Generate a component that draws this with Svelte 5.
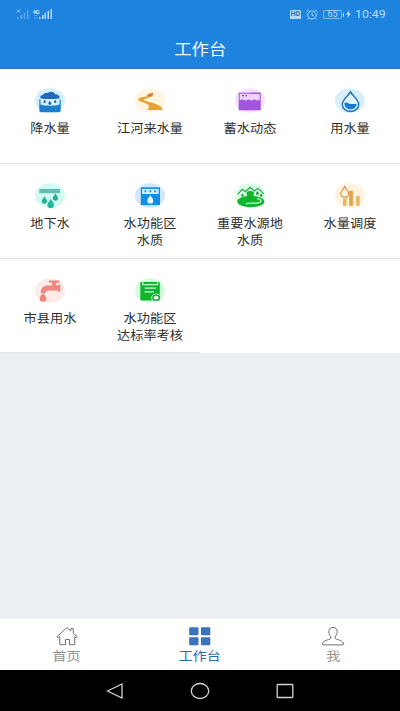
<script lang="ts">
  const items = [
    { icon: 'rain', lines: ['降水量'], halo: '#d3effc' },
    { icon: 'river', lines: ['江河来水量'], halo: '#fff6e2' },
    { icon: 'storage', lines: ['蓄水动态'], halo: '#f3e2fc' },
    { icon: 'usage', lines: ['用水量'], halo: '#d7effc' },
    { icon: 'ground', lines: ['地下水'], halo: '#d0fbf3' },
    { icon: 'zone', lines: ['水功能区', '水质'], halo: '#d3e7fa' },
    { icon: 'source', lines: ['重要水源地', '水质'], halo: '#d9fce6' },
    { icon: 'dispatch', lines: ['水量调度'], halo: '#fff3df' },
    { icon: 'tap', lines: ['市县用水'], halo: '#fdebe9' },
    { icon: 'check', lines: ['水功能区', '达标率考核'], halo: '#d6fce0' }
  ];

  const tabs = [
    { icon: 'home', label: '首页' },
    { icon: 'work', label: '工作台' },
    { icon: 'me', label: '我' }
  ];

  let active = $state('work');
</script>

{#snippet drop(x: number, y: number, s: number, fill: string)}
  <path
    transform="translate({x} {y}) scale({s})"
    d="M0 -1.4C.4 -.7 1 -.2 1 .4A1 .95 0 0 1 -1 .4C-1 -.2 -.4 -.7 0 -1.4Z"
    {fill}
  />
{/snippet}

<div class="screen">
  <header>
    <div class="status">
      <svg class="signal" width="38" height="13" viewBox="0 0 38 13">
        <g fill="#5ba6ec">
          <rect x="2" y="9" width="1.5" height="2" />
          <rect x="5.5" y="7" width="1.5" height="4" />
          <rect x="8.7" y="4.5" width="1.5" height="6.500" />
          <rect x="12" y="2.500" width="1.500" height="8.500" />
        </g>
        <path d="M2 1.500l3 3M5 1.500l-3 3" stroke="#a9d4f8" stroke-width=".9" />
        <text x="17.500" y="5.500" font-size="6" font-weight="bold" fill="#d0e8fc" textLength="7">4G</text>
        <path d="M19 7.500h3.500M19 10h3.500" stroke="#5ba6ec" />
        <g fill="#b9dcfa">
          <rect x="24" y="9" width="1.500" height="2" />
          <rect x="27" y="7" width="1.500" height="4" />
          <rect x="29.500" y="4.800" width="1.500" height="6.200" />
          <rect x="32.500" y="3" width="1.500" height="8" />
          <rect x="35.500" y="1" width="1.500" height="10" />
        </g>
      </svg>
      <div class="right">
        <span class="hd">HD</span>
        <svg class="alarm" width="12" height="11" viewBox="0 0 12 11" fill="none" stroke="#b3daf9">
          <ellipse cx="6" cy="6" rx="4.300" ry="4" />
          <path d="M.7 2.800L3 .8M11.300 2.800L9 .8M6 3.800V6.200L7.800 7M2.800 9.200L2 10.400M9.200 9.200L10 10.400" />
        </svg>
        <span class="battery">65</span>
        <svg width="5" height="8" viewBox="0 0 5 8"><path d="M3.300 0L0 4.400h2L1.500 8 5 3.400H3z" fill="#b9dcfa" /></svg>
        <span class="time">10:49</span>
      </div>
    </div>
    <h1><span>工作台</span></h1>
  </header>

  <main>
    <div class="grid">
      {#each items as item}
        <div class="cell">
          <svg width="32" height="28" viewBox="0 0 32 28">
            <ellipse cx="16" cy="13.500" rx="15" ry="12.300" fill={item.halo} />
            {#if item.icon === 'rain'}
              <path d="M5.300 12.500h21.400v11.100a1.700 1.700 0 0 1-1.700 1.700H7a1.700 1.700 0 0 1-1.700-1.700z" fill="#1b7fd0" />
              <path d="M6.500 11.500h19v6c-4 1.600-15 1.600-19 0z" fill="#d5effd" />
              <path d="M7 11.500C5.500 10 6.600 8.200 8.800 8C10 5.600 13 6 14 5.700C16.500 4.200 20 4.700 21 7.200C24 7 27 9.500 25 11.500C19 12.300 13 12.300 7 11.500Z" fill="#1f68ba" />
              {@render drop(10.7, 14.4, 1.2, '#1268bd')}
              {@render drop(15.8, 15.8, 1.5, '#1268bd')}
              {@render drop(21.2, 14.4, 1.2, '#1268bd')}
            {:else if item.icon === 'river'}
              <path d="M19.500 6C18.500 8.400 15.500 9 12 9.500C7.500 10.100 3.800 11 4.300 12.800C5 15.200 12 15.400 14.300 18C15.600 19.600 14.600 21.400 13.500 23H28.700C29 20.600 25.500 18.300 20.500 16.500C15.500 14.800 9.400 14 10 12.600C10.700 11.200 17 10.700 18.800 8.700Z" fill="#e9a136" />
              <path d="M12.500 8.500l3.500-2.300 3.800-.3-2 2.600-2.300 1z" fill="#d97a3a" />
            {:else if item.icon === 'storage'}
              <rect x="4.700" y="5.700" width="22" height="17.600" fill="#ead2fa" />
              <path d="M4.700 5.700h11.600v1H5.700v6.600c1.600 0 1.600-.7 3-.7s1.500 1 3 1 1.600-1 3-1 1.500 1 3 1 1.500-1 3-1 1.500 1 3 1 1-.6 2-.6V7H16.300V5.500h10.400v17.800h-22z" fill="#a455de" />
              <path d="M8 8.700h2M11.500 8.700h1.500" stroke="#8c35cb" stroke-width="1.200" />
            {:else if item.icon === 'usage'}
              <path d="M16.500 5C18.500 8.600 24.700 12.400 24.700 17.400A8.200 7 0 0 1 8.300 17.400C8.300 12.400 14.500 8.600 16.500 5Z" fill="#e4f5fe" stroke="#2c79b5" stroke-width="1.600" />
              <path d="M10.400 16c2.300-1.500 4 .5 6.500 1 2 .4 3.800-.4 5.800-.3-.1 3.500-2.800 5.600-6.200 5.600-3.500 0-6.200-2.300-6.100-6.300z" fill="#1679d2" />
            {:else if item.icon === 'ground'}
              <rect x="5.300" y="7" width="20.700" height="4.200" fill="#58b9ab" />
              <path d="M6 8.400h20M6 10h20" stroke="#8fd5ca" stroke-width=".6" stroke-dasharray="1.200 .8" />
              {@render drop(10.4, 18.2, 2.6, '#25ad96')}
              {@render drop(16.7, 21.7, 3.3, '#25b79d')}
              {@render drop(21.4, 15.2, 2.6, '#25ad96')}
            {:else if item.icon === 'zone'}
              <rect x="6.800" y="5.300" width="19.200" height="17.800" fill="#158de2" />
              <rect x="8.200" y="7" width="16.400" height="5" fill="#d9effe" />
              <path d="M10.500 9.200h1.800M15.400 9.200h1.800M20.200 9.200H22" stroke="#168fe0" stroke-width="2" />
              {@render drop(16.3, 17.5, 3, '#e8f7ff')}
            {:else if item.icon === 'source'}
              <ellipse cx="16.800" cy="19.500" rx="13.600" ry="5.700" fill="#12b52c" />
              <path d="M12.500 10.500c1.200-2 6-2 7.500 0l-.8 6h-6z" fill="#12b52c" />
              <path d="M3.700 12.400L8.300 7.300l3 2.300L16 5.300l4.300 3.700 3.700-2.400 6 5.300" fill="none" stroke="#2aa34a" stroke-width="1.200" />
              <path d="M23 16.700c4.800.6 5.500 3.600 1 4.200-4 .6-9-.6-12 1" fill="none" stroke="#c8fad4" stroke-width="1.200" />
              {@render drop(8.5, 13, 1.3, '#17a236')}
              {@render drop(23.4, 11, 1.5, '#17a236')}
              {@render drop(27.2, 13, 1.3, '#17a236')}
            {:else if item.icon === 'dispatch'}
              <rect x="9" y="16.500" width="3.600" height="7.400" fill="#ecb463" />
              <rect x="15.200" y="8.800" width="3.700" height="15.100" fill="#e3a24c" />
              <rect x="22.200" y="14" width="3.400" height="9.900" fill="#ecb463" />
              <path d="M10.800 4.500C12 7.500 14.800 9 14.800 11.700A4 3.600 0 0 1 6.800 11.700C6.800 9 9.600 7.500 10.800 4.500Z" fill="#fff2dc" stroke="#d88b3d" stroke-width="1.100" />
            {:else if item.icon === 'tap'}
              <path d="M15 3.600h10.400v2.200h-3.200v2.600H24V7.800h2.300v7H24v-1.200h-9c-2.200 0-3 .7-3.200 2.400H6.700C6.700 11 9.500 8.400 14 8.400h4.200V5.800H15z" fill="#ee8780" />
              {@render drop(9, 20.2, 3.4, '#ee8780')}
            {:else}
              <rect x="6.300" y="5" width="19.500" height="18.500" rx="1" fill="#0db62d" />
              <path d="M8.800 4v3.600h14.800V4" fill="none" stroke="#c8f9d2" stroke-width="1.200" />
              <path d="M10.500 11.200h11.400M10.500 14.800h9.500" stroke="#c8f9d2" stroke-width="1.200" />
              <ellipse cx="22.200" cy="20.700" rx="5" ry="3.900" fill="#ddfbe4" />
              <ellipse cx="22.200" cy="20.700" rx="3.300" ry="2.500" fill="#fff" stroke="#18a73a" stroke-width="1.500" />
            {/if}
          </svg>
          <div class="label">
            {#each item.lines as line}
              <span>{line}</span>
            {/each}
          </div>
        </div>
      {/each}
    </div>
  </main>

  <nav class="tabs">
    {#each tabs as tab}
      <button class:active={active === tab.icon} onclick={() => (active = tab.icon)}>
        <svg width="24" height="20" viewBox="0 0 24 20" fill="none" stroke="#717171" stroke-width="1">
          {#if tab.icon === 'home'}
            <path d="M1.800 10.800L12 1.500l3.800 3.400V2.600h2.400v4.500l4 3.700-1 .9-1.500-.7v7.700h-5.200v-5.200h-4v5.200H4.800V11l-2 .6z" stroke-linejoin="round" />
          {:else if tab.icon === 'work'}
            <g fill="#3a72bd" stroke="none">
              <rect x="1.200" y="1.200" width="9.300" height="8" rx="1" />
              <rect x="13" y="1.200" width="9.300" height="8" rx="1" />
              <rect x="1.200" y="11.300" width="9.300" height="8" rx="1" />
              <rect x="13" y="11.300" width="9.300" height="8" rx="1" />
            </g>
          {:else}
            <path d="M12 1.400c3 0 4.300 2 4.200 4.400 0 2-.9 3.500-1.900 4.400v2.400c1.500 1.100 8.400 1.800 8.400 5.800 0 .3-.3.500-.7.500H2c-.4 0-.7-.2-.7-.5 0-4 6.900-4.700 8.400-5.800v-2.400C8.700 9.300 7.800 7.800 7.800 5.800 7.700 3.400 9 1.400 12 1.400z" />
          {/if}
        </svg>
        <span>{tab.label}</span>
      </button>
    {/each}
  </nav>

  <footer>
    <svg width="18" height="18" viewBox="0 0 18 18"><path d="M1.500 9L16 2v14z" /></svg>
    <svg width="20" height="18" viewBox="0 0 20 18"><ellipse cx="10" cy="9" rx="8.700" ry="7.500" /></svg>
    <svg width="18" height="18" viewBox="0 0 18 18"><rect x="1.200" y="2.500" width="15.600" height="13" rx=".5" /></svg>
  </footer>
</div>

<style>
  :global(body) {
    margin: 0;
  }

  .screen {
    display: flex;
    flex-direction: column;
    width: 400px;
    height: 711px;
    overflow: hidden;
    background: #ebeff3;
    font-family: Roboto, 'Noto Sans CJK SC', sans-serif;
  }

  header {
    box-sizing: border-box;
    height: 69px;
    background: #1e82df;
    border-bottom: 1px solid #2673bd;
  }

  .status {
    display: flex;
    justify-content: space-between;
    height: 28px;
    padding: 0 14px 0 15px;
    color: #b9dcfa;
  }

  .signal {
    margin-top: 8px;
  }

  .right {
    display: flex;
    align-items: center;
  }

  .hd {
    width: 11px;
    height: 9px;
    border-radius: 1px;
    background: #b3daf9;
    color: #1e72c7;
    font-size: 7px;
    font-weight: bold;
    line-height: 9px;
    text-align: center;
  }

  .alarm {
    margin: 0 5px 0 5px;
  }

  .battery {
    position: relative;
    box-sizing: border-box;
    width: 19px;
    height: 9px;
    margin-right: 4px;
    border: 1px solid #83bcf0;
    border-radius: 2px;
    font-size: 9px;
    line-height: 7px;
    text-align: center;
  }

  .battery::after {
    content: '';
    position: absolute;
    top: 2px;
    right: -3px;
    width: 1px;
    height: 4px;
    background: #b9dcfa;
  }

  .time {
    width: 31px;
    margin-left: 4px;
    font-size: 11px;
    transform: scaleX(1.12);
    transform-origin: left;
  }

  h1 {
    margin: 0;
    padding-top: 2px;
    font-size: 15.5px;
    font-weight: 400;
    line-height: 39px;
    color: #f2fbff;
    text-align: center;
  }

  h1 span {
    display: inline-block;
    padding-top: 1px;
    transform: scaleX(1.12);
  }

  main {
    flex: 1;
  }

  .grid {
    display: grid;
    grid-template-columns: repeat(4, 100px);
    grid-template-rows: 95px 94.5px 94.5px;
    background: #fff;
  }

  .cell {
    box-sizing: border-box;
    display: flex;
    flex-direction: column;
    align-items: center;
    padding-top: 18px;
    border-bottom: 1px solid #e2e4e7;
  }

  .label {
    display: flex;
    flex-direction: column;
    align-items: center;
    margin-top: 6px;
    font-size: 12px;
    line-height: 17px;
    color: #2e2e2e;
    white-space: nowrap;
    transform: scaleX(1.1);
  }

  .tabs {
    display: grid;
    grid-template-columns: repeat(3, 1fr);
    height: 51px;
    background: #fff;
  }

  .tabs button {
    display: flex;
    flex-direction: column;
    align-items: center;
    padding: 7px 0 0;
    border: 0;
    background: none;
    font-family: inherit;
    font-size: 12.5px;
    line-height: 22px;
    color: #929292;
  }

  .tabs button span {
    transform: scaleX(1.12);
  }

  .tabs .active {
    color: #2c6ca8;
  }

  footer {
    display: flex;
    justify-content: center;
    align-items: center;
    gap: 66px;
    height: 41px;
    background: #000;
  }

  footer svg {
    fill: none;
    stroke: #d2d2d2;
    stroke-width: 1.3;
  }
</style>
